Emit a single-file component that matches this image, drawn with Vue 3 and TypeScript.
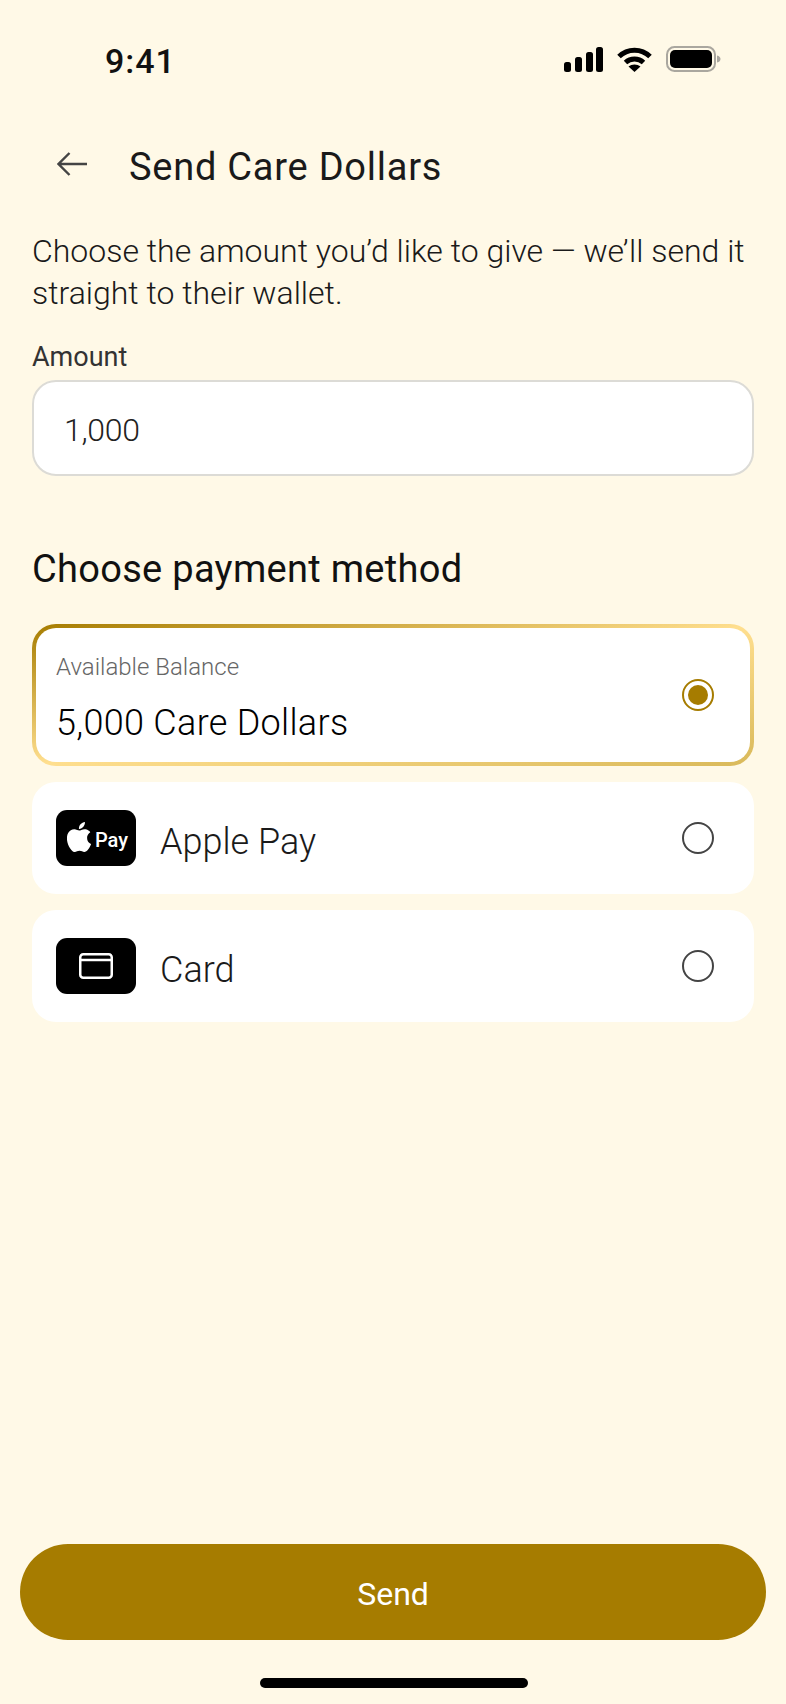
<script setup lang="ts">
interface Method {
  id: string
  label: string
  kind: 'apple' | 'card'
}
const methods: Method[] = [
  { id: 'apple', label: 'Apple Pay', kind: 'apple' },
  { id: 'card', label: 'Card', kind: 'card' },
]
</script>

<template>
  <div class="page">
    <div class="status">
      <span class="time">9:41</span>
      <div class="status-icons">
        <svg width="39" height="25" viewBox="0 0 39 25" fill="#000">
          <rect x="0" y="15" width="7" height="10" rx="2.5" />
          <rect x="11" y="10" width="7" height="15" rx="2.5" />
          <rect x="22" y="5" width="7" height="20" rx="2.5" />
          <rect x="32" y="0" width="7" height="25" rx="2.5" />
        </svg>
        <svg width="35" height="25" viewBox="0 0 35 25" fill="none" stroke="#000" stroke-width="5">
          <path d="M2 9.5C10.5 1 24.5 1 33 9.5" />
          <path d="M8.5 15.5C13.5 10.8 21.5 10.8 26.5 15.5" />
          <path d="M17.5 25L11.5 19.6C14.8 16.8 20.2 16.8 23.5 19.6Z" fill="#000" stroke="none" />
        </svg>
        <svg width="55" height="26" viewBox="0 0 55 26">
          <rect x="1" y="1" width="48" height="24" rx="7.5" fill="none" stroke="#aaa79f" stroke-width="2" />
          <rect x="4" y="4" width="42" height="18" rx="5" fill="#000" />
          <path d="M51 9.5C53.5 10 54.5 11.5 54.5 13S53.5 16 51 16.500Z" fill="#aaa79f" />
        </svg>
      </div>
    </div>

    <header class="header">
      <svg class="back" width="30" height="24" viewBox="0 0 30 24" fill="none" stroke="#444" stroke-width="2.400">
        <path d="M30 12H1.500M12.500 1L1.500 12L12.500 23" />
      </svg>
      <h1 class="title">Send Care Dollars</h1>
    </header>

    <main class="content">
      <p class="intro">Choose the amount you’d like to give — we’ll send it straight to their wallet.</p>
      <label class="label">Amount</label>
      <div class="input">1,000</div>

      <h2 class="section">Choose payment method</h2>

      <div class="methods">
        <div class="balance-border">
          <div class="balance">
            <div class="balance-text">
              <span class="balance-label">Available Balance</span>
              <span class="balance-value">5,000 Care Dollars</span>
            </div>
            <span class="radio selected"><span class="dot"></span></span>
          </div>
        </div>

        <div v-for="m in methods" :key="m.id" class="method">
          <div class="method-icon">
            <template v-if="m.kind === 'apple'">
              <svg class="apple" width="24" height="30" viewBox="2.300 0 19.400 24" preserveAspectRatio="none" fill="#fff">
                <path d="M12.152 6.896c-.948 0-2.415-1.078-3.96-1.04-2.04.027-3.91 1.183-4.961 3.014-2.117 3.675-.546 9.103 1.519 12.09 1.013 1.454 2.208 3.09 3.792 3.039 1.52-.065 2.09-.987 3.935-.987 1.831 0 2.35.987 3.96.948 1.637-.026 2.676-1.48 3.676-2.948 1.156-1.688 1.636-3.325 1.662-3.415-.039-.013-3.182-1.221-3.22-4.857-.026-3.04 2.48-4.494 2.597-4.559-1.429-2.09-3.623-2.324-4.39-2.376-2-.156-3.675 1.09-4.61 1.09zM15.53 3.83c.843-1.012 1.4-2.427 1.245-3.83-1.207.052-2.662.805-3.532 1.818-.78.896-1.454 2.338-1.273 3.714 1.338.104 2.715-.688 3.559-1.701" />
              </svg>
              <span class="pay">Pay</span>
            </template>
            <svg v-else width="34" height="26" viewBox="0 0 34 26" fill="none" stroke="#fff" stroke-width="2.500">
              <rect x="1.250" y="1.250" width="31.500" height="23.500" rx="3" />
              <path d="M1 7H33" />
            </svg>
          </div>
          <span class="method-label">{{ m.label }}</span>
          <span class="radio"></span>
        </div>
      </div>
    </main>

    <button class="send"><span class="send-text">Send</span></button>
    <div class="home"></div>
  </div>
</template>

<style>
html, body { margin: 0; background: #fff9e7; }
</style>

<style scoped>
.page {
  width: 786px;
  height: 1704px;
  background: #fff9e7;
  display: flex;
  flex-direction: column;
  font-family: Roboto, "Open Sans", sans-serif;
  color: #111;
  box-sizing: border-box;
}
.status {
  height: 120px;
  flex: none;
  display: flex;
  align-items: flex-start;
  justify-content: space-between;
  padding: 46px 65px 0 105px;
  box-sizing: border-box;
}
.time {
  font-size: 34px;
  font-weight: 500;
  line-height: 30px;
  letter-spacing: 1px;
  color: #111;
}
.status-icons {
  display: flex;
  align-items: center;
  gap: 14px;
}
.header {
  display: flex;
  align-items: center;
  height: 92px;
  flex: none;
  padding-left: 57px;
  gap: 42px;
}
.back {
  margin-bottom: 4px;
}
.title {
  margin: 2px 0 0;
  font-size: 38px;
  font-weight: 400;
  line-height: 44px;
  letter-spacing: 0.76px;
  color: #1a1a1a;
}
.content {
  padding: 18px 32px 0;
  flex: 1;
}
.intro {
  margin: 0;
  font-size: 32px;
  line-height: 42px;
  font-weight: 300;
  color: #1a1a1a;
}
.label {
  display: block;
  margin-top: 26px;
  font-size: 27px;
  line-height: 34px;
  font-weight: 400;
  color: #333;
}
.input {
  margin-top: 6px;
  height: 96px;
  box-sizing: border-box;
  border: 2px solid #dcdbd6;
  border-radius: 24px;
  background: #fff;
  padding: 3px 0 0 30px;
  display: flex;
  align-items: center;
  font-size: 32px;
  font-weight: 300;
  letter-spacing: -0.3px;
  color: #222;
}
.section {
  margin: 69px 0 0;
  font-size: 38px;
  line-height: 48px;
  font-weight: 400;
  letter-spacing: 0.3px;
  color: #111;
}
.methods {
  margin-top: 31px;
  display: flex;
  flex-direction: column;
  gap: 16px;
}
.balance-border {
  padding: 4px;
  border-radius: 24px;
  background: linear-gradient(to bottom right, #a67c00 0%, #ffdf8f 50%, #d9b95a 100%);
}
.balance {
  height: 134px;
  box-sizing: border-box;
  background: #fff;
  border-radius: 20px;
  padding: 0 36px 0 20px;
  display: flex;
  align-items: center;
  justify-content: space-between;
}
.balance-text {
  display: flex;
  flex-direction: column;
  gap: 21px;
  padding-top: 7px;
}
.balance-label {
  font-size: 24px;
  line-height: 28px;
  font-weight: 300;
  color: #666;
}
.balance-value {
  font-size: 36px;
  line-height: 42px;
  font-weight: 300;
  letter-spacing: 0.3px;
  color: #000;
}
.method {
  height: 112px;
  background: #fff;
  border-radius: 24px;
  display: flex;
  align-items: center;
  padding: 0 40px 0 24px;
}
.method-icon {
  width: 80px;
  height: 56px;
  flex: none;
  background: #000;
  border-radius: 11px;
  display: flex;
  align-items: center;
  justify-content: center;
  gap: 4px;
  color: #fff;
}
.apple {
  margin-left: 3px;
  margin-bottom: 2px;
}
.pay {
  font-size: 20px;
  font-weight: 500;
  margin-top: 3px;
}
.method-label {
  margin-left: 24px;
  padding-top: 7px;
  flex: 1;
  font-size: 36px;
  font-weight: 300;
  color: #1a1a1a;
}
.radio {
  width: 32px;
  height: 32px;
  box-sizing: border-box;
  border: 2px solid #444;
  border-radius: 50%;
  flex: none;
  display: flex;
  align-items: center;
  justify-content: center;
}
.radio.selected {
  border-color: #a67c00;
}
.dot {
  width: 20px;
  height: 20px;
  border-radius: 50%;
  background: #a67c00;
}
.send {
  flex: none;
  margin: 0 20px;
  height: 96px;
  border: 0;
  border-radius: 48px;
  background: #a67c00;
  color: #fff;
  font-family: inherit;
  font-size: 32px;
  font-weight: 400;
  padding: 4px 0 0;
}
.home {
  flex: none;
  width: 268px;
  height: 10px;
  border-radius: 5px;
  background: #000;
  margin: 38px 0 16px 260px;
}
</style>
